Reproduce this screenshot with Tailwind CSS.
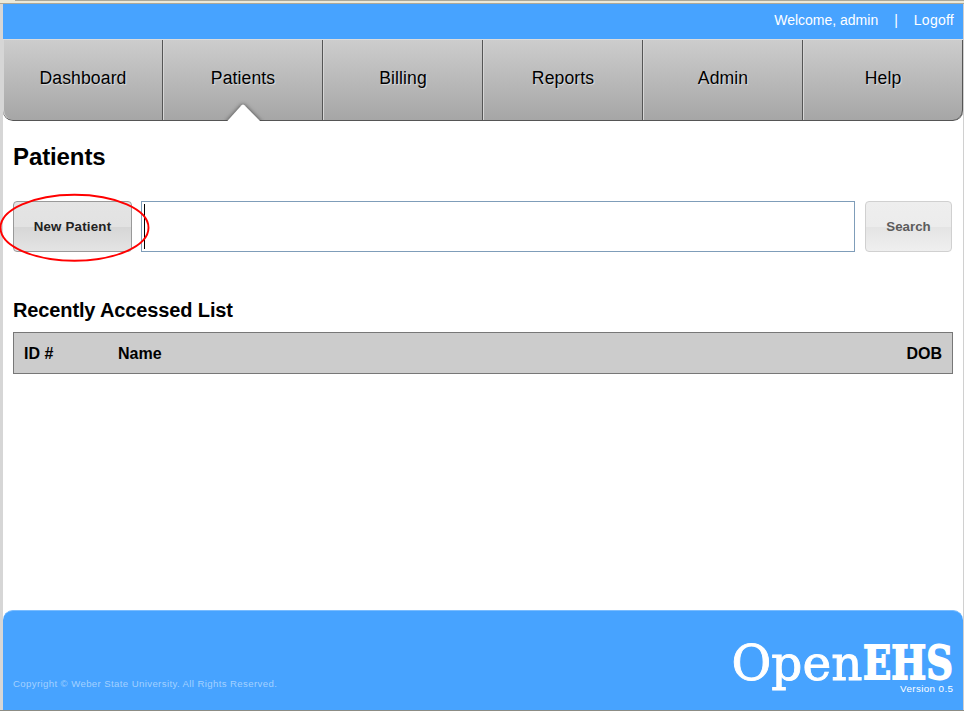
<!DOCTYPE html>
<html lang="en">
<head>
<meta charset="utf-8">
<title>OpenEHS - Patients</title>
<script src="https://cdn.jsdelivr.net/npm/@tailwindcss/browser@4"></script>
</head>
<body class="w-[964px] h-[711px] overflow-hidden bg-white font-['Liberation_Sans',Arial,sans-serif] text-black">
<div class="flex h-[711px] flex-col">
  <div class="h-[3px] shrink-0 bg-[#ece9d8]"><div class="ml-[15px] h-px bg-[#aca899]"></div></div>
  <div class="h-px shrink-0 bg-[#aca899]"></div>
  <div class="flex h-[706px] border-l-[3px] border-r border-l-[#d6d6d6] border-r-[#d0d0d0]">
    <div class="flex w-[960px] flex-col">
      <header class="flex h-[35px] shrink-0 items-center justify-end bg-[#47a3ff] pr-[9px] pb-[2px] text-[14px] text-white">
        <span>Welcome, admin</span><span class="mx-[16px]">|</span><a class="tracking-[0.25px]">Logoff</a>
      </header>
      <nav class="relative grid h-[82px] shrink-0 grid-cols-6 overflow-hidden rounded-b-[10px] border-t border-b border-t-[#dcdcdc] border-b-[#555] bg-linear-to-b from-[#cdcdcd] to-[#a6a6a6] text-center text-[17.6px] leading-[76px] tracking-[0.1px] [text-shadow:1px_1px_1px_#ddd]">
        <a class="rounded-bl-[10px] border-l border-r border-l-[#d6d6d6] border-r-[#555]">Dashboard</a>
        <a class="border-l border-r border-l-[#d6d6d6] border-r-[#555]">Patients</a>
        <a class="border-l border-r border-l-[#d6d6d6] border-r-[#555]">Billing</a>
        <a class="border-l border-r border-l-[#d6d6d6] border-r-[#555]">Reports</a>
        <a class="border-l border-r border-l-[#d6d6d6] border-r-[#555]">Admin</a>
        <a class="rounded-br-[10px] border-l border-r border-l-[#d6d6d6] border-r-[#555]">Help</a>
      </nav>
      <div class="relative h-0">
        <svg class="absolute left-[218px] top-[-22px] h-[22px] w-[44px] overflow-hidden" viewBox="0 0 44 22"><path class="[filter:drop-shadow(0_0_2px_#444)]" d="M4.5 24 L20.5 6.3 Q22 4.8 23.5 6.3 L41 24Z" fill="#fff"/></svg>
      </div>
      <main class="flex-1 pl-[10px] pr-[10px]">
        <h1 class="mt-[21px] h-[30px] text-[24px] leading-[30px] font-bold tracking-[-0.1px]">Patients</h1>
        <div class="mt-[29px] flex h-[51px]">
          <div class="relative w-[119px]">
            <button class="h-[51px] w-[119px] rounded-[4px] border border-[#999] bg-[linear-gradient(#e4e4e4_0%,#e2e2e2_50%,#d6d6d6_51%,#e4e4e4_100%)] text-[13.3px] font-bold tracking-[0.2px] text-[#222]">New Patient</button>
            <svg class="absolute left-[-13px] top-[-8px] h-[70px] w-[151px]" viewBox="0 0 151 70" fill="none" stroke="#f00" stroke-width="1.9"><ellipse cx="74.5" cy="34.7" rx="74" ry="33"/></svg>
          </div>
          <div class="ml-[9px] w-[714px] border border-[#7f9db9] py-[2px] pl-[2px]"><div class="h-[45px] w-px bg-black"></div></div>
          <button class="ml-[10px] w-[87px] rounded-[4px] border border-[#d0d0d0] bg-[linear-gradient(#eeeeee_0%,#ececec_50%,#e4e4e4_51%,#efefef_100%)] text-[13.3px] font-bold text-[#5c5c5c]">Search</button>
        </div>
        <h2 class="mt-[46px] h-[24px] text-[20px] leading-[24px] font-bold tracking-[-0.13px]">Recently Accessed List</h2>
        <div class="mt-[10px] flex h-[42px] items-center border border-[#777] bg-[#ccc] px-[10px] pt-[2px] text-[16px] font-bold">
          <div class="w-[94px]">ID #</div><div class="flex-1">Name</div><div>DOB</div>
        </div>
      </main>
      <footer class="flex h-[100px] shrink-0 justify-between rounded-t-[10px] border-t border-[#79bcff] bg-[#47a3ff] pl-[10px]">
        <p class="mt-[66px] text-[9.6px] leading-[14px] tracking-[0.39px] text-[#a3d1ff]">Copyright © Weber State University. All Rights Reserved.</p>
        <svg class="h-[99px] w-[232px] overflow-visible" viewBox="731 611 232 99" fill="#fff">
          <g font-family="DejaVu Serif, serif" stroke="#fff">
            <text x="731.5" y="679.5" font-size="49" stroke-width="0.9" textLength="131" lengthAdjust="spacingAndGlyphs">Open</text>
            <text x="863" y="679.3" font-size="47" font-weight="bold" stroke-width="1.8" textLength="90" lengthAdjust="spacingAndGlyphs">EHS</text>
          </g>
          <text x="900" y="692" font-family="Liberation Sans, sans-serif" font-size="9.8" textLength="53">Version 0.5</text>
        </svg>
      </footer>
    </div>
  </div>
  <div class="h-px shrink-0 bg-[#8c8c84]"></div>
</div>
</body>
</html>
